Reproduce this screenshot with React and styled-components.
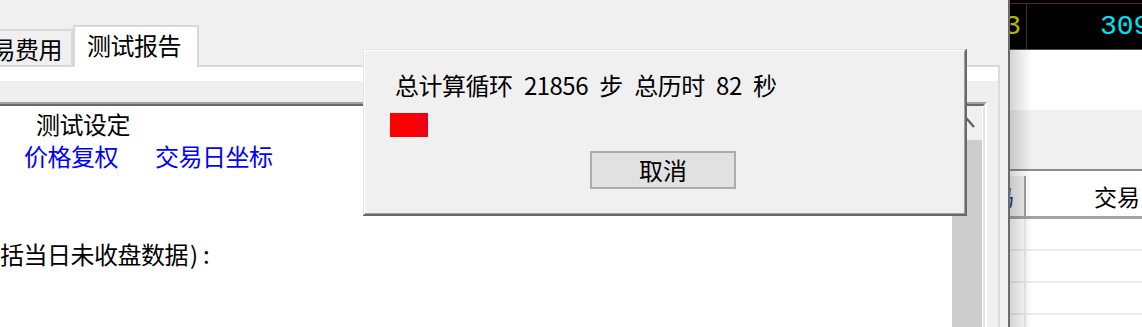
import React from 'react';
import styled, { createGlobalStyle } from 'styled-components';

const Global = createGlobalStyle`
  *, *::before, *::after { box-sizing: border-box; }
  html, body { margin: 0; padding: 0; width: 1142px; height: 327px; overflow: hidden; background: #f0f0f0; }
  body { font-family: "Noto Sans CJK SC", "Noto Sans", sans-serif; color: #000; }
`;

const Screen = styled.div`
  display: flex;
  width: 1142px;
  height: 327px;
  overflow: hidden;
`;

/* ---------- main (left) window ---------- */
const MainWindow = styled.div`
  position: relative;
  flex: none;
  width: 1010px;
  height: 100%;
  background: #f0f0f0;
  border-right: 2px solid #6b6b6b;
  display: flex;
  flex-direction: column;
  overflow: hidden;
`;

const TabStrip = styled.div`
  flex: none;
  height: 65px;
  display: flex;
  align-items: flex-end;
`;

const Tab = styled.div`
  flex: none;
  font-size: 24px;
  line-height: 24px;
  letter-spacing: -0.5px;
  white-space: nowrap;
  padding-top: 6px;
  border-top: 2px solid #d9d9d9;
  border-right: 2px solid #d9d9d9;
  ${(p) =>
    p.$active
      ? `
    position: relative;
    z-index: 1;
    height: 42px;
    margin-bottom: -2px;
    background: #ffffff;
    border-left: 2px solid #d9d9d9;
    padding-left: 12px;
    padding-right: 16px;
  `
      : `
    height: 36px;
    margin-left: -32px;
    background: #f0f0f0;
    padding-right: 9px;
  `}
`;

const Panel = styled.div`
  flex: 1;
  min-height: 0;
  margin-right: 8px;
  background: #f0f0f0;
  border-top: 2px solid #d9d9d9;
  border-right: 2px solid #dcdcdc;
  display: flex;
  flex-direction: column;
`;

const WhiteStrip = styled.div`
  flex: none;
  height: 14px;
  background: #ffffff;
`;

const ToolStrip = styled.div`
  flex: none;
  height: 21px;
  background: #efefef;
`;

const OuterFrame = styled.div`
  flex: 1;
  min-height: 0;
  margin-right: 11px;
  border-top: 2px solid #a0a0a0;
  border-right: 2px solid #ffffff;
  display: flex;
`;

const InnerFrame = styled.div`
  flex: 1;
  display: flex;
  background: #ffffff;
  border-top: 2px solid #696969;
  border-right: 2px solid #e3e3e3;
`;

const Content = styled.div`
  flex: 1;
  display: flex;
  flex-direction: column;
  font-size: 24px;
  line-height: 24px;
  letter-spacing: -0.5px;
  white-space: nowrap;
  overflow: hidden;
`;

const Line = styled.div`
  display: flex;
  gap: ${(p) => p.$gap || 0}px;
  margin-top: ${(p) => p.$top}px;
  padding-left: ${(p) => p.$left}px;
  color: ${(p) => (p.$blue ? '#0000ff' : '#000')};
`;

const Punct = styled.span`
  letter-spacing: 5px;
  margin-left: 2px;
`;

const ScrollBar = styled.div`
  flex: none;
  width: 30px;
  margin-right: 1px;
  display: flex;
  flex-direction: column;
`;

const ScrollButton = styled.div`
  flex: none;
  height: 34px;
  background: #f0f0f0;
  display: flex;
  align-items: center;
  justify-content: center;
`;

const ScrollThumb = styled.div`
  flex: 1;
  background: #cdcdcd;
`;

/* ---------- progress dialog ---------- */
const Dialog = styled.div`
  position: absolute;
  left: 363px;
  top: 49px;
  width: 604px;
  height: 167px;
  z-index: 5;
  background: #f0f0f0;
  border-style: solid;
  border-width: 1px 2px 2px 1px;
  border-color: #e3e3e3 #696969 #696969 #e3e3e3;
  box-shadow: inset 1px 1px 0 #ffffff, inset -1px -1px 0 #a0a0a0;
  display: flex;
  flex-direction: column;
  align-items: flex-start;
  padding-top: 23px;
`;

const Message = styled.div`
  margin-left: 31px;
  font-size: 24px;
  line-height: 24px;
  letter-spacing: -0.5px;
  word-spacing: 6.5px;
  white-space: nowrap;
`;

const ProgressBlock = styled.div`
  margin-top: 16px;
  margin-left: 26px;
  width: 38px;
  height: 24px;
  background: linear-gradient(to right, #ff0000 55%, #e9001d);
`;

const CancelButton = styled.button`
  margin-top: 14px;
  margin-left: 226px;
  width: 146px;
  height: 38px;
  padding: 0;
  border: 2px solid #adadad;
  background: #e1e1e1;
  font-family: "Noto Sans CJK SC", sans-serif;
  font-size: 24px;
  line-height: 24px;
  color: #000;
`;

/* ---------- right pane (other window) ---------- */
const RightPane = styled.div`
  position: relative;
  flex: 1;
  min-width: 0;
  height: 100%;
  background: #ffffff;
  display: flex;
  flex-direction: column;
  overflow: hidden;
`;

const QuoteBar = styled.div`
  flex: none;
  height: 50px;
  background: #000;
  padding-top: 3px;
  border-bottom: 1px solid #505050;
  display: flex;
`;

const QuoteRow = styled.div`
  flex: 1;
  display: flex;
  border-top: 1px solid #55291a;
`;

const QuoteCell = styled.div`
  display: flex;
  align-items: center;
  overflow: hidden;
  white-space: nowrap;
  font-family: "Liberation Mono", monospace;
  font-size: 28px;
  line-height: 1;
  color: ${(p) => p.$color};
  ${(p) =>
    p.$narrow
      ? `flex: none; width: 17px; justify-content: flex-end; padding-right: 5px; border-right: 1px solid #55291a;`
      : `flex: 1; padding-left: 73px;`}
`;

const Block = styled.div`
  flex: none;
  height: ${(p) => p.$h}px;
  background: ${(p) => p.$bg};
`;

const Table = styled.div`
  flex: 1;
  border-top: 2px solid #8c8c8c;
  padding-top: 5px;
  display: flex;
  flex-direction: column;
`;

const HeaderRow = styled.div`
  flex: none;
  height: 43px;
  display: flex;
  border-bottom: 3px solid #a3a3a3;
`;

const HeaderCell = styled.div`
  display: flex;
  align-items: center;
  overflow: hidden;
  white-space: nowrap;
  font-size: 23px;
  line-height: 24px;
  ${(p) =>
    p.$narrow
      ? `flex: none; width: 16px; justify-content: flex-end; padding-right: 10px; background: #f0f0f0; color: #1c3c8c; border-right: 2px solid #a0a0a0;`
      : `flex: 1; padding-left: 68px; background: #ffffff;`}
`;

const Row = styled.div`
  flex: none;
  height: 32px;
  display: flex;
  border-bottom: 2px solid #ececec;
`;

const RowCell = styled.div`
  ${(p) => (p.$narrow ? `flex: none; width: 16px; border-right: 2px solid #ececec;` : `flex: 1;`)}
`;

const EdgeShadow = styled.div`
  position: absolute;
  left: 0;
  top: 50px;
  bottom: 0;
  width: 22px;
  pointer-events: none;
  background: linear-gradient(to right, rgba(0, 0, 0, 0.17), rgba(0, 0, 0, 0));
`;

export default function App() {
  return (
    <>
      <Global />
      <Screen>
        <MainWindow>
          <TabStrip>
            <Tab>交易费用</Tab>
            <Tab $active>测试报告</Tab>
          </TabStrip>
          <Panel>
            <WhiteStrip />
            <ToolStrip />
            <OuterFrame>
              <InnerFrame>
                <Content>
                  <Line $top={6} $left={36}>测试设定</Line>
                  <Line $top={8} $left={24} $gap={37} $blue>
                    <span>价格复权</span>
                    <span>交易日坐标</span>
                  </Line>
                  <Line $top={74} $left={-1}>
                    括当日未收盘数据<Punct>):</Punct>
                  </Line>
                </Content>
                <ScrollBar>
                  <ScrollButton>
                    <svg width="16" height="12" viewBox="0 0 16 12">
                      <polyline points="1,10 8,2 15,10" fill="none" stroke="#606060" strokeWidth="2.4" />
                    </svg>
                  </ScrollButton>
                  <ScrollThumb />
                </ScrollBar>
              </InnerFrame>
            </OuterFrame>
          </Panel>

          <Dialog>
            <Message>总计算循环 21856 步 总历时 82 秒</Message>
            <ProgressBlock />
            <CancelButton>取消</CancelButton>
          </Dialog>
        </MainWindow>

        <RightPane>
          <QuoteBar>
            <QuoteRow>
              <QuoteCell $narrow $color="#b5b500">13</QuoteCell>
              <QuoteCell $color="#00e1f0">309.12</QuoteCell>
            </QuoteRow>
          </QuoteBar>
          <Block $h={60} $bg="#ffffff" />
          <Block $h={59} $bg="#f0f0f0" />
          <Table>
            <HeaderRow>
              <HeaderCell $narrow>代码</HeaderCell>
              <HeaderCell>交易日期</HeaderCell>
            </HeaderRow>
            {[0, 1, 2, 3].map((i) => (
              <Row key={i}>
                <RowCell $narrow />
                <RowCell />
              </Row>
            ))}
          </Table>
          <EdgeShadow />
        </RightPane>
      </Screen>
    </>
  );
}
